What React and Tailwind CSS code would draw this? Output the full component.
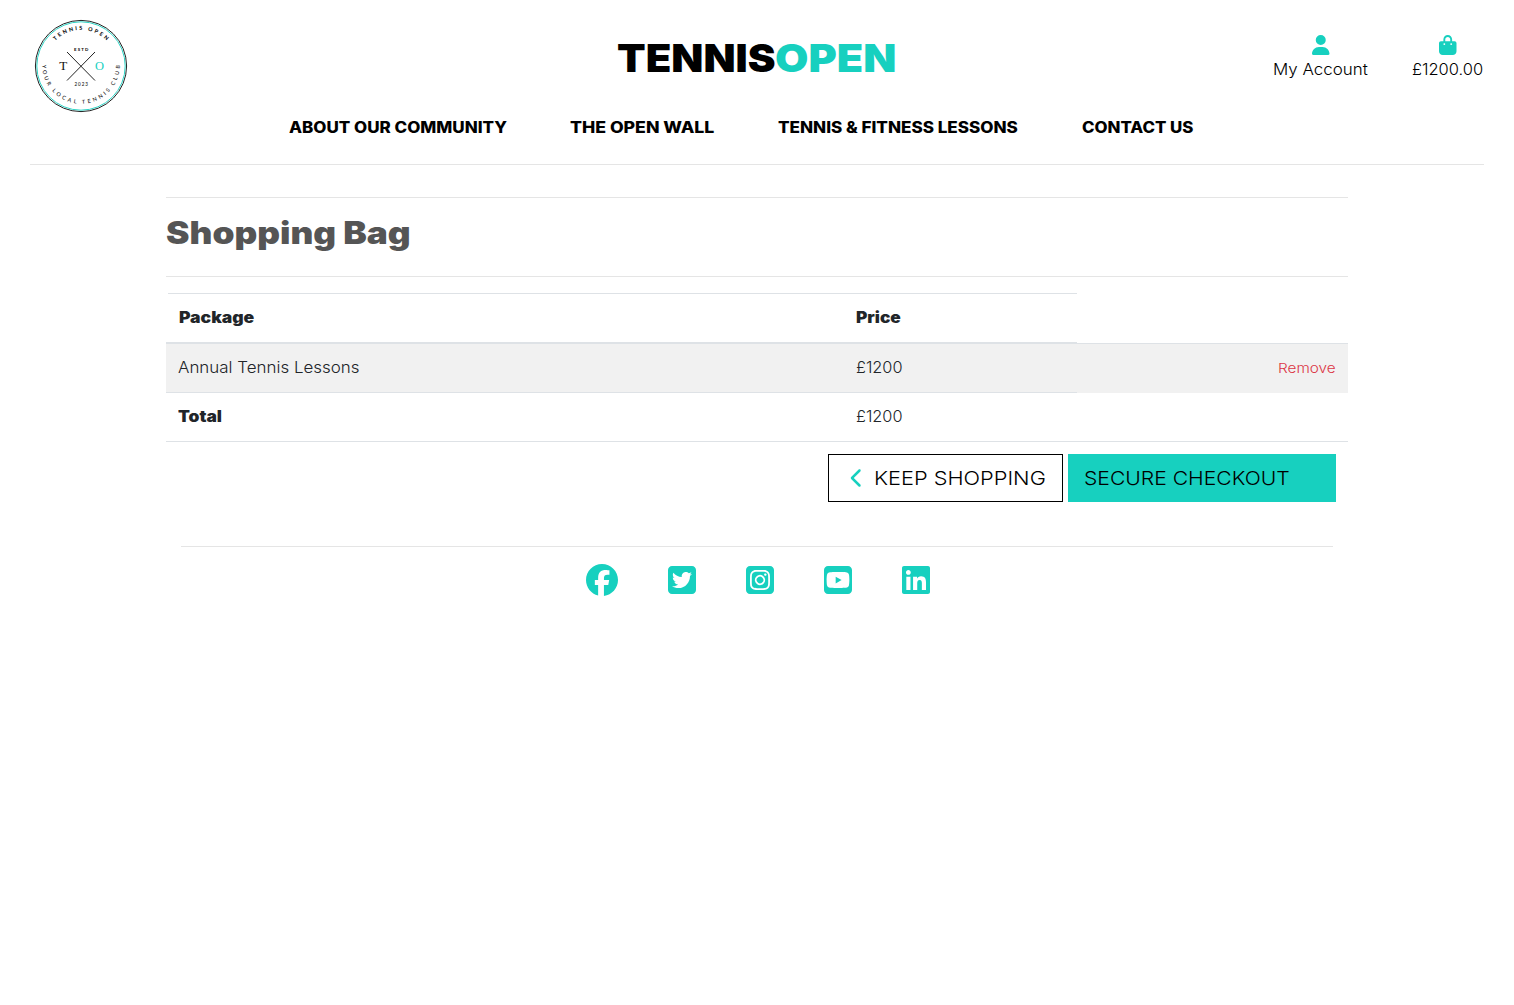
import {
  FaUser,
  FaBagShopping,
  FaChevronLeft,
  FaFacebook,
  FaSquareTwitter,
  FaSquareInstagram,
  FaSquareYoutube,
  FaLinkedin,
} from "react-icons/fa6";

// A label with a fixed box whose glyphs are widened to fill it.
function Label({ box, stretch, className = "", children }) {
  return (
    <span className={`block whitespace-nowrap ${box} ${className}`}>
      <span className={`inline-block origin-left ${stretch}`}>{children}</span>
    </span>
  );
}

const MOTTO = [
  { word: "YOUR", start: 0, length: 22 },
  { word: "LOCAL", start: 28, length: 28 },
  { word: "TENNIS", start: 62, length: 32 },
  { word: "CLUB", start: 99.5, length: 22 },
];

function Logo() {
  return (
    <svg width="94" height="94" viewBox="-47 -47 94 94" fontFamily="Lato, sans-serif">
      <defs>
        <path id="arc-top" d="M-25.8,-25.3 A36.1,36.1 0 0 1 25.8,-25.3 L28,-23" />
        <path id="arc-bottom" d="M-38.8,-1 A38.8,38.8 0 0 0 38.8,-1 L38.4,-8" />
      </defs>
      <circle r="45.6" fill="none" stroke="#222" strokeWidth="1" />
      <circle r="44.2" fill="none" stroke="#2fd5c6" strokeWidth="1" />
      <path d="M-14,-14 L14,14.5 M14,-14 L-14,14.5" stroke="#222" strokeWidth="1" />
      <text fontSize="5.4" fontWeight="900" fill="#111">
        <textPath href="#arc-top" textLength="57">TENNIS OPEN</textPath>
      </text>
      {MOTTO.map(({ word, start, length }) => (
        <text key={word} fontSize="5.4" fontWeight="500" fill="#111">
          <textPath href="#arc-bottom" startOffset={start} textLength={length}>{word}</textPath>
        </text>
      ))}
      <text x="-7" y="-15" fontSize="4.4" fontWeight="900" fill="#111" textLength="14.4">ESTD</text>
      <text x="-6.5" y="19.8" fontSize="4.6" fontWeight="500" fill="#111" textLength="13.4">2023</text>
      <text x="-21.8" y="4" fontSize="13.4" fill="#111" fontFamily="Liberation Serif, serif" textLength="8" lengthAdjust="spacingAndGlyphs">T</text>
      <text x="14" y="4" fontSize="13.4" fill="#17d0bf" fontFamily="Liberation Serif, serif" textLength="9" lengthAdjust="spacingAndGlyphs">O</text>
    </svg>
  );
}

export default function App() {
  return (
    <div className="min-h-[1005px] w-[1514px] overflow-hidden bg-white font-['Inter',sans-serif] text-[15.4px] font-light text-black">
      <header className="mx-[30px] h-[165px] border-b border-[#e5e5e5]">
        <div className="grid h-[113px] grid-cols-[300px_1fr_300px]">
          <div className="pt-[19px] pl-1">
            <Logo />
          </div>
          <h1 className="flex justify-center pt-[38px] pr-px text-[38.5px] leading-10 font-black">
            <Label box="w-[158px]" stretch="scale-x-[1.085]">TENNIS</Label>
            <Label box="w-[122px]" stretch="scale-x-[1.12]" className="text-[#17d0bf]">OPEN</Label>
          </h1>
          <div className="flex justify-end gap-[43px] pt-[35px]">
            <a className="flex flex-col items-center leading-6">
              <FaUser className="h-5 w-[17.5px] text-[#17d0bf]" />
              <Label box="w-[96px]" stretch="scale-x-[1.1]" className="mt-[3px]">My Account</Label>
            </a>
            <a className="flex flex-col items-center leading-6">
              <FaBagShopping className="h-5 w-[17.5px] text-[#17d0bf]" />
              <Label box="w-[72px]" stretch="scale-x-[1.07]" className="mt-[3px]">£1200.00</Label>
            </a>
          </div>
        </div>
        <nav className="ml-[259px] flex gap-[63.2px] pt-[3px] leading-6 font-extrabold">
          <Label box="w-[218px]" stretch="scale-x-[1.104]">ABOUT OUR COMMUNITY</Label>
          <Label box="w-[145px]" stretch="scale-x-[1.15]">THE OPEN WALL</Label>
          <Label box="w-[240px]" stretch="scale-x-[1.11]">TENNIS &amp; FITNESS LESSONS</Label>
          <Label box="w-[112px]" stretch="scale-x-[1.094]">CONTACT US</Label>
        </nav>
      </header>

      <main className="mx-[166px] mt-8">
        <div className="h-20 border-y border-[#e5e5e5] pt-[15px]">
          <h2 className="text-[30.8px] leading-10 font-black text-[#555]">
            <Label box="w-[246px]" stretch="scale-x-[1.145]">Shopping Bag</Label>
          </h2>
        </div>

        <div className="mt-4 text-[#212529]">
          <div className="ml-0.5 flex h-[49px] w-[909px] items-center border-t border-[#dee2e6] pl-[10.5px] font-black">
            <Label box="w-[677px]" stretch="scale-x-[1.14]">Package</Label>
            <Label box="w-[46px]" stretch="scale-x-[1.12]">Price</Label>
          </div>
          <div className="flex h-[51px] bg-[#f1f1f1]">
            <div className="flex w-[911px] items-center border-t-2 border-b border-[#dee2e6] pl-3">
              <Label box="w-[678px]" stretch="scale-x-[1.1]">Annual Tennis Lessons</Label>
              <Label box="w-[48px]" stretch="scale-x-[1.06]">£1200</Label>
            </div>
            <div className="flex-1 border-t border-white">
              <div className="flex h-[50px] items-center justify-end border-t border-[#dee2e6] pr-3 text-[13.5px] text-[#dc3545]">
                <Label box="w-[58px]" stretch="scale-x-[1.135]">Remove</Label>
              </div>
            </div>
          </div>
          <div className="flex h-[49px] items-center border-b border-[#dee2e6] pl-3">
            <Label box="w-[678px]" stretch="scale-x-[1.13]" className="font-black">Total</Label>
            <Label box="w-[48px]" stretch="scale-x-[1.06]">£1200</Label>
          </div>
        </div>

        <div className="mt-3 flex justify-end gap-[5px] pr-3 text-[19.25px] text-black">
          <a className="flex h-12 w-[235px] items-center border border-black pl-[21px]">
            <FaChevronLeft className="mr-[10px] h-5 w-[14px] text-[#17d0bf]" />
            <Label box="w-[172px]" stretch="scale-x-[1.13]">KEEP SHOPPING</Label>
          </a>
          <a className="flex h-12 w-[268px] items-center bg-[#17d0bf] pl-4">
            <Label box="w-[206px]" stretch="scale-x-[1.097]">SECURE CHECKOUT</Label>
          </a>
        </div>
      </main>

      <footer className="mx-[181px] mt-11 border-t border-[#e5e5e5]">
        <div className="flex items-center justify-center gap-[50px] pt-[17px] pl-px text-[#17d0bf]">
          <FaFacebook className="size-8" />
          <FaSquareTwitter className="h-8 w-7" />
          <FaSquareInstagram className="h-8 w-7" />
          <FaSquareYoutube className="h-8 w-7" />
          <FaLinkedin className="h-8 w-7" />
        </div>
      </footer>
    </div>
  );
}
